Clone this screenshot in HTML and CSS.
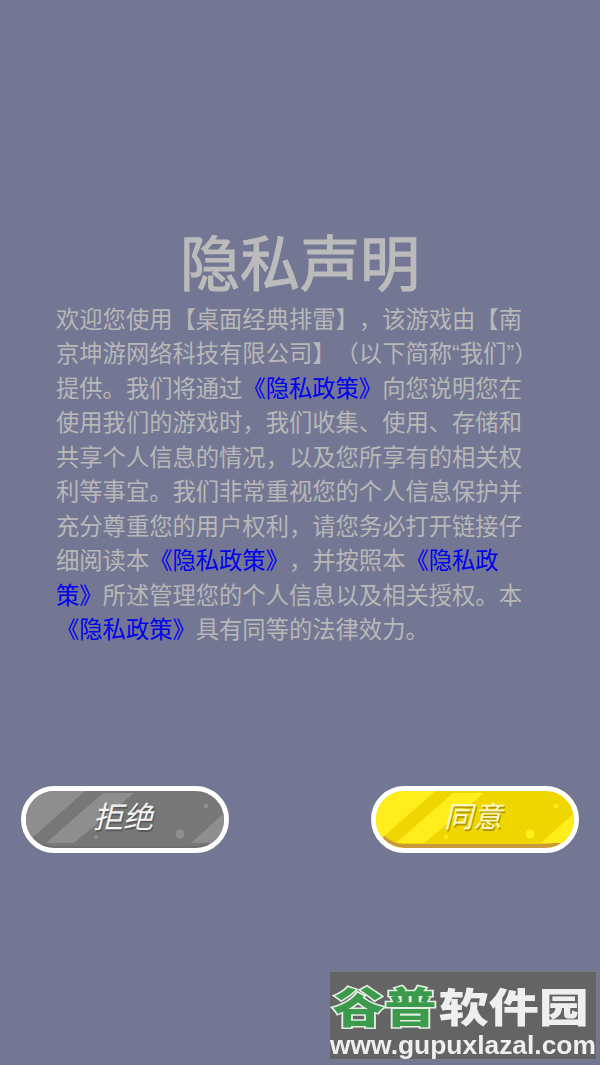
FILE: index.html
```html
<!DOCTYPE html>
<html lang="zh-CN">
<head>
<meta charset="utf-8">
<title>隐私声明</title>
<link rel="stylesheet" href="styles.css">
</head>
<body>
<main class="screen">
  <h1 class="title">隐私声明</h1>
  <p class="body-text">欢迎您使用【桌面经典排雷】，该游戏由【南京坤游网络科技有限公司】（以下简称<span class="quote">“</span>我们<span class="quote">”</span>）提供。我们将通过<a class="link">《隐私政策》</a>向您说明您在使用我们的游戏时，我们收集、使用、存储和共享个人信息的情况，以及您所享有的相关权利等事宜。我们非常重视您的个人信息保护并充分尊重您的用户权利，请您务必打开链接仔细阅读本<a class="link">《隐私政策》</a>，并按照本<a class="link">《隐私政<br>策》</a>所述管理您的个人信息以及相关授权。本<br><a class="link">《隐私政策》</a>具有同等的法律效力。</p>
  <div class="actions">
    <button class="btn btn-grey">
      <svg class="btn-art" viewBox="0 0 198 57" aria-hidden="true">
        <polygon class="shine" points="-6,-6 66,-6 -2,54 -6,54"/>
        <polygon class="shine" points="77,2 108,2 48,52 20,52"/>
        <polygon class="shine" points="198,22 165,52 190,52 198,45"/>
        <circle class="shine" cx="180" cy="15" r="2.5"/>
        <circle class="shine" cx="154" cy="43" r="4.5"/>
        <circle class="shine" cx="70" cy="46" r="2"/>
      </svg>
      <span class="btn-label">拒绝</span>
    </button>
    <button class="btn btn-yellow">
      <svg class="btn-art" viewBox="0 0 198 57" aria-hidden="true">
        <polygon class="shine" points="-6,-6 66,-6 -2,54 -6,54"/>
        <polygon class="shine" points="77,2 108,2 48,52 20,52"/>
        <polygon class="shine" points="198,22 165,52 190,52 198,45"/>
        <circle class="shine" cx="180" cy="15" r="2.5"/>
        <circle class="shine" cx="154" cy="43" r="4.5"/>
        <circle class="shine" cx="70" cy="46" r="2"/>
      </svg>
      <span class="btn-label">同意</span>
    </button>
  </div>
  <div class="watermark">
    <div class="wm-name"><span class="wm-green">谷普</span><span class="wm-white">软件园</span></div>
    <div class="wm-url">www.gupuxlazal.com</div>
  </div>
</main>
</body>
</html>
```

FILE: styles.css
```css
* { box-sizing: border-box; }
html, body { margin: 0; padding: 0; }
body {
  background: #747793;
  font-family: "Noto Sans CJK SC", "Noto Sans", sans-serif;
}
.screen {
  position: relative;
  height: 1065px;
  overflow: hidden;
  display: flex;
  flex-direction: column;
  align-items: center;
  padding-top: 220px;
}
.title {
  margin: 0;
  font-size: 60px;
  line-height: 80px;
  font-weight: 400;
  -webkit-text-stroke: 1.2px #bbbbbb;
  color: #bbbbbb;
  text-align: center;
}
.body-text {
  margin: 1px 0 0 56px;
  align-self: flex-start;
  width: 484px;
  font-size: 23.3px;
  line-height: 34.45px;
  color: #b8b8b8;
  text-spacing-trim: space-all;
  line-break: anywhere;
}
.quote { font-family: "Liberation Sans", sans-serif; line-height: 0; }
.link { color: #0000f0; }
.actions {
  align-self: stretch;
  display: flex;
  justify-content: space-between;
  padding: 0 21px;
  margin-top: 140px;
}
.btn {
  position: relative;
  width: 208px;
  height: 67px;
  padding: 0 4px 9px 0;
  border: 5px solid #fff;
  border-radius: 34px;
  overflow: hidden;
  display: flex;
  align-items: center;
  justify-content: center;
  font-family: inherit;
}
.btn-grey { background: #777777; box-shadow: inset 0 -2px 0 #6e6e6e; }
.btn-yellow { background: #efd600; box-shadow: inset 0 -4px 0 #c9993c; }
.btn-art { position: absolute; left: 0; top: 0; width: 198px; height: 57px; filter: blur(.4px); }
.btn-grey .shine { fill: #8e8e8e; }
.btn-yellow .shine { fill: #ffee1c; }
.btn-label {
  position: relative;
  font-size: 30px;
  font-weight: 400;
  font-style: italic;
  line-height: 1;
  color: #f2f2f2;
  text-shadow: 1px 2px 0 rgba(70, 70, 70, .6);
}
.btn-yellow .btn-label { font-size: 29px; color: #fbf6c8; text-shadow: 1px 2px 0 rgba(150, 120, 0, .7); }
.watermark {
  position: absolute;
  left: 329px;
  top: 971px;
  width: 268px;
  height: 89px;
  background: #646464;
  border: 1px solid #7d7d7d;
  overflow: hidden;
  filter: blur(.5px);
}
.wm-name {
  display: flex;
  align-items: center;
  width: 214px;
  height: 66px;
  padding-left: 2px;
  font-size: 40px;
  line-height: 66px;
  font-weight: 900;
  white-space: nowrap;
  transform: scaleX(1.25);
  transform-origin: left center;
}
.wm-green {
  font-size: 41.5px;
  color: #3b9a4b;
  -webkit-text-stroke: 3px #e2eee2;
  paint-order: stroke fill;
}
.wm-white { color: #efefef; margin-left: 2px; }
.wm-url {
  font-family: "Liberation Sans", sans-serif;
  font-weight: 700;
  font-size: 26.4px;
  line-height: 28px;
  margin-top: -7px;
  color: #efefef;
  white-space: nowrap;
  text-align: center;
}
```
